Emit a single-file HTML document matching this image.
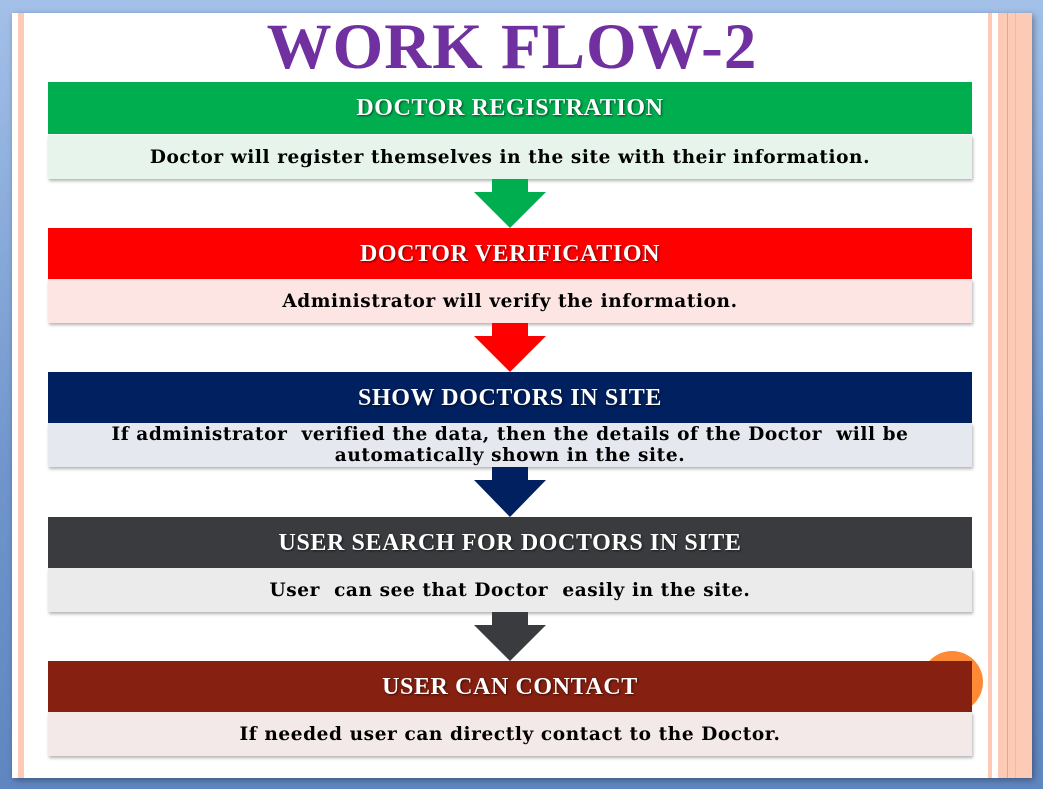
<!DOCTYPE html>
<html><head><style>
*{margin:0;padding:0;box-sizing:border-box}
body{width:1043px;height:789px;overflow:hidden;background:linear-gradient(180deg,#a3c0e8,#6f95cc 60%,#5f86c0);position:relative;font-family:"Liberation Serif",serif}
.slide{position:absolute;left:12px;top:13px;width:1020px;height:765px;background:#fff;box-shadow:2px 2px 6px rgba(0,0,0,.35)}
.s{position:absolute;top:0;height:765px;background:#fdcab6}
h1{position:absolute;left:0;width:1024px;top:10px;text-align:center;color:#7030a0;font-size:65px;font-weight:bold;letter-spacing:1px;line-height:74px}
.hd{position:absolute;left:48px;width:924px;height:52px;color:#fff;font-weight:bold;font-size:24px;letter-spacing:.6px;text-align:center;line-height:52px;text-shadow:1px 1px 2px rgba(0,0,0,.6)}
.bd{position:absolute;left:48px;width:924px;height:44px;font-family:"DejaVu Serif",serif;font-weight:bold;font-size:18.5px;text-align:center;color:#000;box-shadow:1px 2px 3px rgba(0,0,0,.3);display:flex;align-items:center;justify-content:center;line-height:21px;letter-spacing:.6px;white-space:nowrap}
svg{position:absolute;left:474px}
</style></head><body>
<div class="slide">
<div class="s" style="left:6px;width:6px"></div>
<div class="s" style="left:976px;width:4px"></div>
<div class="s" style="left:986px;width:34px"></div>
<div style="position:absolute;left:995px;top:0;width:1px;height:765px;background:#f7a070"></div>
<div style="position:absolute;left:1003px;top:0;width:1px;height:765px;background:#f9b79a"></div>
</div>
<div style="position:absolute;left:921px;top:651px;width:62px;height:62px;border-radius:50%;background:#fe8a35"></div>
<h1>WORK FLOW-2</h1>

<div class="hd" style="top:82px;background:#00ad4f">DOCTOR REGISTRATION</div>
<div class="bd" style="top:135px;background:#e6f4ec">Doctor will register themselves in the site with their information.</div>
<svg style="top:179px" width="72" height="49"><polygon points="18,0 54,0 54,13 72,13 36,49 0,13 18,13" fill="#00ad4f"/></svg>

<div class="hd" style="top:228px;background:#fe0000">DOCTOR VERIFICATION</div>
<div class="bd" style="top:279px;background:#fde5e3">Administrator will verify the information.</div>
<svg style="top:323px" width="72" height="49"><polygon points="18,0 54,0 54,13 72,13 36,49 0,13 18,13" fill="#fe0000"/></svg>

<div class="hd" style="top:372px;background:#002060">SHOW DOCTORS IN SITE</div>
<div class="bd" style="top:423px;background:#e5e8ef">If administrator&nbsp; verified the data, then the details of the Doctor&nbsp; will be<br>automatically shown in the site.</div>
<svg style="top:467px" width="72" height="50"><polygon points="18,0 54,0 54,13 72,13 36,50 0,13 18,13" fill="#002060"/></svg>

<div class="hd" style="top:517px;background:#3a3b3e">USER SEARCH FOR DOCTORS IN SITE</div>
<div class="bd" style="top:568px;background:#ebebeb">User&nbsp; can see that Doctor&nbsp; easily in the site.</div>
<svg style="top:612px" width="72" height="49"><polygon points="18,0 54,0 54,13 72,13 36,49 0,13 18,13" fill="#3a3b3e"/></svg>

<div class="hd" style="top:661px;background:#862010">USER CAN CONTACT</div>
<div class="bd" style="top:712px;background:#f3e9e8">If needed user can directly contact to the Doctor.</div>
</body></html>
